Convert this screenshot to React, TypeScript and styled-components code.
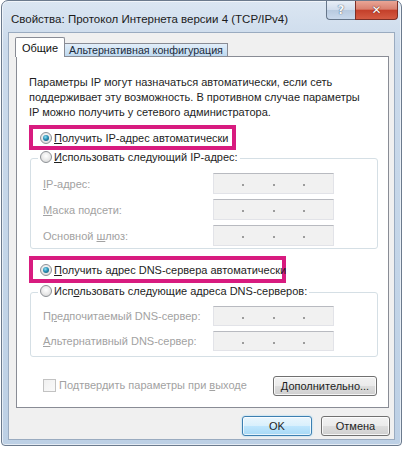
import styled, { createGlobalStyle, css } from 'styled-components';

const GlobalStyle = createGlobalStyle`
  html, body {
    margin: 0;
    padding: 0;
    background: #fff;
  }

  body {
    font-family: 'Liberation Sans', Arial, sans-serif;
    font-size: 11px;
    color: #1e1e1e;
  }
`;

const Window = styled.div`
  box-sizing: border-box;
  width: 401px;
  height: 446px;
  margin-left: 1px;
  display: flex;
  flex-direction: column;
  padding: 0 6px 5px;
  border: 1px solid #6b7a8d;
  border-radius: 7px 7px 4px 4px;
  background: linear-gradient(180deg, #dbe6f2 0%, #cbdaeb 10%, #c3d5e8 60%, #bdd0e5 100%);
  box-shadow: inset 0 0 0 1px rgba(255, 255, 255, 0.6);
`;

const TitleBar = styled.div`
  display: flex;
  justify-content: space-between;
  align-items: flex-start;
  height: 31px;
  flex: none;
`;

const Title = styled.div`
  padding: 11px 0 0 3px;
  font-size: 11.5px;
  line-height: 14px;
  color: #1b1b1b;
  white-space: nowrap;
`;

const CaptionButtons = styled.div`
  display: flex;
  margin-right: -3px;
`;

const CaptionButton = styled.div<{ $kind: 'help' | 'close' }>`
  box-sizing: border-box;
  height: 19px;
  display: flex;
  align-items: center;
  justify-content: center;
  border: 1px solid #66768a;
  border-top: none;
  font-family: 'DejaVu Sans', sans-serif;
  font-weight: bold;
  font-size: 12px;
  color: #fff;
  ${(p) =>
    p.$kind === 'help'
      ? css`
          width: 29px;
          border-right: none;
          border-radius: 0 0 0 4px;
          background: linear-gradient(180deg, #e7eef6 0%, #d1dded 48%, #b8cadf 52%, #c9d9ec 100%);
          color: #f4f7fb;
          text-shadow: 0 0 1px #536479, 0 0 1px #536479;
        `
      : css`
          width: 43px;
          border-color: #7c2f26;
          border-radius: 0 0 4px 0;
          background: linear-gradient(180deg, #e9a596 0%, #d98170 45%, #c4402b 52%, #d45b43 100%);
          text-shadow: 0 0 1px #6d1d12, 0 0 1px #6d1d12;
        `}
`;

const Client = styled.div`
  flex: 1;
  display: flex;
  flex-direction: column;
  padding: 4px 4px 0 6px;
  background: #f0f0f0;
  border: 1px solid #9aabc0;
`;

const TabRow = styled.div`
  display: flex;
  align-items: flex-end;
  height: 20px;
  flex: none;
`;

const Tab = styled.div<{ $active?: boolean; $width: number }>`
  box-sizing: border-box;
  width: ${(p) => p.$width}px;
  text-align: center;
  white-space: nowrap;
  border: 1px solid #898c95;
  ${(p) =>
    p.$active
      ? css`
          height: 20px;
          padding-top: 3px;
          line-height: 14px;
          border-bottom: none;
          border-radius: 2px 2px 0 0;
          background: #fff;
          color: #111;
        `
      : css`
          height: 14px;
          line-height: 12px;
          font-size: 10.7px;
          border-left: none;
          background: linear-gradient(180deg, #e2eef9 0%, #d0e4f5 50%, #bed9f0 100%);
          color: #1c2c3c;
        `}
`;

const TabFiller = styled.div`
  flex: 1;
  height: 0;
  border-bottom: 1px solid #898c95;
  margin-right: 1px;
`;

const Panel = styled.div`
  box-sizing: border-box;
  width: 373px;
  height: 351px;
  margin-left: 1px;
  padding: 18px 11px 0 12px;
  display: flex;
  flex-direction: column;
  background: #fff;
  border: 1px solid #898c95;
  border-top: none;
`;

const Description = styled.p`
  margin: 0;
  line-height: 15px;
  color: #1e1e1e;
`;

const Highlight = styled.div<{ $width: number; $height: number; $top: number }>`
  box-sizing: border-box;
  width: ${(p) => p.$width}px;
  height: ${(p) => p.$height}px;
  margin-top: ${(p) => p.$top}px;
  padding-left: 7px;
  display: flex;
  align-items: center;
  border: 4px solid #d81b7f;
`;

const RadioRow = styled.label`
  display: inline-flex;
  align-items: center;
  gap: 2px;
  line-height: 14px;
  color: #1e1e1e;
  white-space: nowrap;
`;

const Radio = styled.span<{ $checked?: boolean }>`
  box-sizing: border-box;
  width: 12px;
  height: 12px;
  border-radius: 50%;
  border: 1px solid #8d9196;
  background: radial-gradient(circle at 50% 40%, #ffffff 0%, #e8e8e8 55%, #cfcfcf 100%);
  display: flex;
  align-items: center;
  justify-content: center;

  &::after {
    content: '';
    display: ${(p) => (p.$checked ? 'block' : 'none')};
    width: 6px;
    height: 6px;
    border-radius: 50%;
    background: radial-gradient(circle at 40% 35%, #8fe0f5 0%, #2a8fb5 45%, #154f68 100%);
  }
`;

const Key = styled.span`
  text-decoration: underline;
  text-underline-offset: 1px;
`;

const Group = styled.fieldset<{ $top: number; $bottom: number }>`
  box-sizing: border-box;
  width: 348px;
  min-width: 0;
  margin: ${(p) => p.$top}px 0 0 1px;
  padding: 0 0 ${(p) => p.$bottom}px 7px;
  border: 1px solid #d5dfe5;
  border-radius: 3px;
`;

const Legend = styled.legend`
  padding: 0 2px;
  line-height: 14px;
`;

const Fields = styled.div<{ $top: number }>`
  display: flex;
  flex-direction: column;
  gap: 5px;
  margin-top: ${(p) => p.$top}px;
`;

const FieldRow = styled.div<{ $height: number }>`
  display: grid;
  grid-template-columns: 175px 121px;
  align-items: center;
  height: ${(p) => p.$height}px;
`;

const FieldLabel = styled.span`
  padding-left: 5px;
  color: #a2a2a2;
  white-space: nowrap;
`;

const IpBox = styled.div`
  box-sizing: border-box;
  height: 100%;
  display: flex;
  justify-content: space-evenly;
  align-items: center;
  background: #f1f1f1;
  border: 1px solid #e2e3e8;
  border-top-color: #b8bac0;
`;

const IpDot = styled.span`
  width: 2px;
  height: 2px;
  margin-top: 3px;
  background: #9c9c9c;
`;

const BottomRow = styled.div`
  display: flex;
  align-items: center;
  justify-content: space-between;
  margin-top: 19px;
  padding-left: 14px;
`;

const CheckRow = styled.label`
  display: flex;
  align-items: center;
  gap: 3px;
  color: #a2a2a2;
  margin-top: -2px;
`;

const CheckBox = styled.span`
  box-sizing: border-box;
  width: 13px;
  height: 13px;
  border: 1px solid #c2c2c2;
  background: linear-gradient(135deg, #f0f0f0, #fafafa);
`;

const Button = styled.div<{ $width: number; $default?: boolean }>`
  box-sizing: border-box;
  width: ${(p) => p.$width}px;
  height: 20px;
  display: flex;
  align-items: center;
  justify-content: center;
  border-radius: 3px;
  color: #1e1e1e;
  white-space: nowrap;
  ${(p) =>
    p.$default
      ? css`
          border: 1px solid #3c7fb1;
          background: linear-gradient(180deg, #eaf6fd 0%, #d9f0fc 48%, #bee6fd 52%, #a7d9f5 100%);
          box-shadow: inset 0 0 0 1px rgba(255, 255, 255, 0.7), 0 0 2px #8fd0f4;
        `
      : css`
          border: 1px solid #707070;
          background: linear-gradient(180deg, #f2f2f2 0%, #ebebeb 48%, #dddddd 52%, #cfcfcf 100%);
          box-shadow: inset 0 0 0 1px rgba(255, 255, 255, 0.8);
        `}
`;

const DialogButtons = styled.div`
  display: flex;
  justify-content: flex-end;
  gap: 9px;
  margin-top: 8px;
`;

function IpField({ label, height }: { label: React.ReactNode; height: number }) {
  return (
    <FieldRow $height={height}>
      <FieldLabel>{label}</FieldLabel>
      <IpBox>
        <IpDot />
        <IpDot />
        <IpDot />
      </IpBox>
    </FieldRow>
  );
}

function App() {
  return (
    <>
      <GlobalStyle />
      <Window>
        <TitleBar>
          <Title>Свойства: Протокол Интернета версии 4 (TCP/IPv4)</Title>
          <CaptionButtons>
            <CaptionButton $kind='help'>?</CaptionButton>
            <CaptionButton $kind='close'>✕</CaptionButton>
          </CaptionButtons>
        </TitleBar>
        <Client>
          <TabRow>
            <Tab $active $width={50}>
              Общие
            </Tab>
            <Tab $width={163}>Альтернативная конфигурация</Tab>
            <TabFiller />
          </TabRow>
          <Panel>
            <Description>
              Параметры IP могут назначаться автоматически, если сеть
              <br />
              поддерживает эту возможность. В противном случае параметры
              <br />
              IP можно получить у сетевого администратора.
            </Description>

            <Highlight $width={207} $height={25} $top={5}>
              <RadioRow>
                <Radio $checked />
                <span>
                  <Key>П</Key>олучить IP-адрес автоматически
                </span>
              </RadioRow>
            </Highlight>

            <Group $top={0} $bottom={2}>
              <Legend>
                <RadioRow>
                  <Radio />
                  <span>
                    <Key>И</Key>спользовать следующий IP-адрес:
                  </span>
                </RadioRow>
              </Legend>
              <Fields $top={7}>
                <IpField
                  height={21}
                  label={
                    <>
                      <Key>I</Key>P-адрес:
                    </>
                  }
                />
                <IpField
                  height={21}
                  label={
                    <>
                      <Key>М</Key>аска подсети:
                    </>
                  }
                />
                <IpField
                  height={21}
                  label={
                    <>
                      Основной <Key>ш</Key>люз:
                    </>
                  }
                />
              </Fields>
            </Group>

            <Highlight $width={257} $height={27} $top={7}>
              <RadioRow>
                <Radio $checked />
                <span>
                  <Key>П</Key>олучить адрес DNS-сервера автоматически
                </span>
              </RadioRow>
            </Highlight>

            <Group $top={1} $bottom={5}>
              <Legend>
                <RadioRow>
                  <Radio />
                  <span>
                    Исп<Key>о</Key>льзовать следующие адреса DNS-серверов:
                  </span>
                </RadioRow>
              </Legend>
              <Fields $top={6}>
                <IpField
                  height={20}
                  label={
                    <>
                      П<Key>р</Key>едпочитаемый DNS-сервер:
                    </>
                  }
                />
                <IpField
                  height={20}
                  label={
                    <>
                      <Key>А</Key>льтернативный DNS-сервер:
                    </>
                  }
                />
              </Fields>
            </Group>

            <BottomRow>
              <CheckRow>
                <CheckBox />
                <span>
                  Подтвердить параметры при <Key>в</Key>ыходе
                </span>
              </CheckRow>
              <Button $width={104}>
                <span>
                  <Key>Д</Key>ополнительно...
                </span>
              </Button>
            </BottomRow>
          </Panel>
          <DialogButtons>
            <Button $width={70} $default>
              OK
            </Button>
            <Button $width={69}>Отмена</Button>
          </DialogButtons>
        </Client>
      </Window>
    </>
  );
}

export default App;
